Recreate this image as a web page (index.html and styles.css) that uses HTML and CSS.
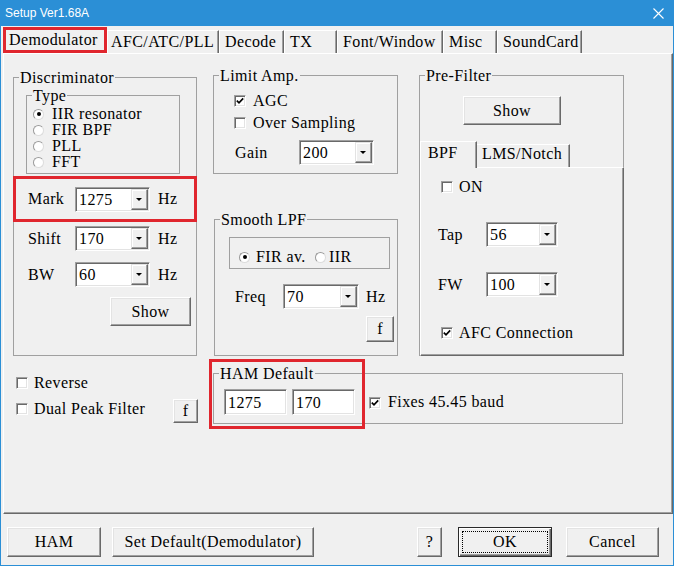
FILE: index.html
```html
<!DOCTYPE html>
<html>
<head>
<meta charset="utf-8">
<title>Setup Ver1.68A</title>
<link rel="stylesheet" href="styles.css">
</head>
<body>
<div class="window">
  <div class="titlebar">
    <span class="title">Setup Ver1.68A</span>
    <svg class="close" width="11" height="11" viewBox="0 0 11 11"><path d="M0.5 0.5L10.5 10.5M10.5 0.5L0.5 10.5" stroke="#fff" stroke-width="1.1" fill="none"/></svg>
  </div>

  <div class="tabs">
    <div class="tab active t-demod">Demodulator</div>
    <div class="tab t-afc">AFC/ATC/PLL</div>
    <div class="tab t-decode">Decode</div>
    <div class="tab t-tx">TX</div>
    <div class="tab t-font">Font/Window</div>
    <div class="tab t-misc">Misc</div>
    <div class="tab t-sound">SoundCard</div>
  </div>

  <div class="page">
    <div class="main-row">
      <fieldset class="group g-disc">
        <legend>Discriminator</legend>
        <fieldset class="group g-type">
          <legend>Type</legend>
          <div class="radio-row first"><span class="rb on"></span>IIR resonator</div>
          <div class="radio-row"><span class="rb"></span>FIR BPF</div>
          <div class="radio-row"><span class="rb"></span>PLL</div>
          <div class="radio-row"><span class="rb"></span>FFT</div>
        </fieldset>
        <div class="field-row mark-row">
          <span class="lbl lbl-disc">Mark</span>
          <div class="combo w75"><span class="val">1275</span><span class="drop"><i class="arrow"></i></span></div>
          <span class="hz">Hz</span>
        </div>
        <div class="field-row disc-row shift-row">
          <span class="lbl lbl-disc">Shift</span>
          <div class="combo w75"><span class="val">170</span><span class="drop"><i class="arrow"></i></span></div>
          <span class="hz">Hz</span>
        </div>
        <div class="field-row disc-row bw-row">
          <span class="lbl lbl-disc">BW</span>
          <div class="combo w75"><span class="val">60</span><span class="drop"><i class="arrow"></i></span></div>
          <span class="hz">Hz</span>
        </div>
        <div class="btn show-disc">Show</div>
      </fieldset>

      <div class="col-mid">
        <fieldset class="group g-limit">
          <legend>Limit Amp.</legend>
          <div class="check-row agc-row"><span class="cb"><svg width="8" height="8" viewBox="0 0 8 8"><polyline points="0.8,3.6 3,5.8 7.2,1.4" fill="none" stroke="#000" stroke-width="1.7"/></svg></span>AGC</div>
          <div class="check-row over-row"><span class="cb"></span>Over Sampling</div>
          <div class="field-row gain-row">
            <span class="lbl lbl-gain">Gain</span>
            <div class="combo w75"><span class="val">200</span><span class="drop"><i class="arrow"></i></span></div>
          </div>
        </fieldset>

        <fieldset class="group g-lpf">
          <legend>Smooth LPF</legend>
          <div class="radio-box">
            <div class="ritem r-fir"><span class="rb on"></span>FIR av.</div>
            <div class="ritem r-iir"><span class="rb"></span>IIR</div>
          </div>
          <div class="field-row freq-row">
            <span class="lbl lbl-freq">Freq</span>
            <div class="combo w76"><span class="val">70</span><span class="drop"><i class="arrow"></i></span></div>
            <span class="hz hz-freq">Hz</span>
          </div>
          <div class="btn f-lpf">f</div>
        </fieldset>
      </div>

      <fieldset class="group g-pre">
        <legend>Pre-Filter</legend>
        <div class="btn show-pre">Show</div>
        <div class="subtabs">
          <div class="subtab-strip">
            <div class="subtab sel">BPF</div>
            <div class="subtab lms">LMS/Notch</div>
          </div>
          <div class="subpage">
            <div class="check-row on-row"><span class="cb"></span>ON</div>
            <div class="field-row tap-row">
              <span class="lbl lbl-pre">Tap</span>
              <div class="combo w72"><span class="val">56</span><span class="drop"><i class="arrow"></i></span></div>
            </div>
            <div class="field-row fw-row">
              <span class="lbl lbl-pre">FW</span>
              <div class="combo w72"><span class="val">100</span><span class="drop"><i class="arrow"></i></span></div>
            </div>
            <div class="check-row afc-row"><span class="cb"><svg width="8" height="8" viewBox="0 0 8 8"><polyline points="0.8,3.6 3,5.8 7.2,1.4" fill="none" stroke="#000" stroke-width="1.7"/></svg></span>AFC Connection</div>
          </div>
        </div>
      </fieldset>
    </div>

    <div class="bottom-row">
      <div class="left-block">
        <div class="check-row rev-row"><span class="cb"></span>Reverse</div>
        <div class="dual-row">
          <div class="check-row dual-label"><span class="cb"></span>Dual Peak Filter</div>
          <div class="btn f-dual">f</div>
        </div>
      </div>
      <fieldset class="group g-ham">
        <legend>HAM Default</legend>
        <div class="ham-row">
          <div class="edit">1275</div>
          <div class="edit edit2">170</div>
          <span class="cb cb-fix"><svg width="8" height="8" viewBox="0 0 8 8"><polyline points="0.8,3.6 3,5.8 7.2,1.4" fill="none" stroke="#000" stroke-width="1.7"/></svg></span>
          <span>Fixes 45.45 baud</span>
        </div>
      </fieldset>
      <div class="red-ham"></div>
    </div>
  </div>

  <div class="buttons">
    <div class="btn b-ham">HAM</div>
    <div class="btn b-setdef">Set Default(Demodulator)</div>
    <div class="btn b-help">?</div>
    <div class="btn b-ok"><span class="focus">OK</span></div>
    <div class="btn b-cancel">Cancel</div>
  </div>
</div>
</body>
</html>
```

FILE: styles.css
```css
* { box-sizing: border-box; }
html, body { margin: 0; padding: 0; }
body {
  width: 674px; height: 566px; overflow: hidden;
  background: #f0f0f0;
  font-family: "Liberation Serif", "Times New Roman", serif;
  font-size: 16px; line-height: 18px; letter-spacing: 0.4px; color: #000;
}
.window {
  width: 674px; height: 566px;
  border: 1px solid #2b8fd6; border-top: none;
  background: #f0f0f0;
}
.titlebar {
  height: 26px; margin: 0 -1px;
  background: #2b8fd6;
  display: flex; align-items: center;
  padding-left: 5px; padding-right: 10px;
}
.title {
  font-family: "Liberation Sans", Arial, sans-serif;
  font-size: 12px; line-height: 14px; letter-spacing: 0;
  color: #fff;
}
.close { margin-left: auto; }

/* main tabs */
.tabs {
  height: 27px; display: flex; align-items: flex-end;
  padding-left: 2px;
}
.tab {
  flex: none; height: 23px;
  border-left: 1px solid #fff; border-top: 1px solid #fff;
  border-right: 1px solid #696969;
  box-shadow: inset -1px 0 0 #a0a0a0;
  padding: 2px 0 0 5px;
  white-space: nowrap; overflow: hidden;
}
.tab.active {
  height: 26px; border: 3px solid #e0262e;
  box-shadow: none;
  padding: 1px 0 0 3px;
}
.t-demod { width: 104px; }
.t-afc { width: 112px; padding-left: 3px; }
.t-decode { width: 65px; }
.t-tx { width: 53px; }
.t-font { width: 106px; }
.t-misc { width: 54px; }
.t-sound { width: 85px; }

.page {
  margin-left: 2px; width: 670px; height: 461px;
  border: 1px solid; border-color: #fff #696969 #696969 #fff;
  box-shadow: inset -1px -1px 0 #a0a0a0;
}

/* group boxes */
.group {
  margin: 0; padding: 0; min-width: 0;
  border: 1px solid #a0a0a0;
}
.group legend {
  padding: 0 1px; margin-left: 5px;
  line-height: 19px;
}

.main-row { display: flex; align-items: flex-start; margin-top: 12px; }
.g-disc { margin: 2px 0 0 9px; width: 184px; height: 288px; }
.col-mid { margin-left: 16px; width: 185px; display: flex; flex-direction: column; }
.g-limit { width: 185px; height: 108px; }
.g-lpf { margin: 36px 0 0 1px; width: 184px; height: 146px; }
.g-pre { margin-left: 21px; width: 205px; height: 290px; }

.g-type { margin: -1px 0 0 12px; width: 154px; height: 88px; }
.radio-row { height: 16px; line-height: 16px; display: flex; align-items: center; padding-left: 6px; }
.radio-row.first { margin-top: 1px; }
.radio-row .rb { margin-right: 8px; }

.rb {
  flex: none; width: 11px; height: 11px; border-radius: 50%;
  background: #fff;
  border: 1px solid; border-color: #9a9a9a #dcdcdc #dcdcdc #9a9a9a;
  display: flex; align-items: center; justify-content: center;
}
.rb.on::after { content: ""; width: 4px; height: 4px; border-radius: 50%; background: #000; }

.cb {
  flex: none; width: 12px; height: 12px; background: #fff;
  border: 1px solid; border-color: #a0a0a0 #fff #fff #a0a0a0;
  box-shadow: inset 1px 1px 0 #696969, inset -1px -1px 0 #e3e3e3;
  display: flex; align-items: center; justify-content: center;
}
.cb svg { display: block; }

.field-row { display: flex; align-items: center; height: 25px; }
.lbl { flex: none; }
.lbl-disc { width: 47px; }
.hz { margin-left: 8px; }
.mark-row {
  margin: 2px 0 0 -1px; width: 184px; height: 46px;
  border: 3px solid #e0262e; padding-left: 12px;
}
.disc-row { padding-left: 14px; }
.shift-row { margin-top: 4px; }
.bw-row { margin-top: 11px; }

.combo {
  flex: none; height: 25px; display: flex; align-items: stretch;
  background: #fff;
  border: 1px solid; border-color: #a0a0a0 #fff #fff #a0a0a0;
  box-shadow: inset 1px 1px 0 #696969, inset -1px -1px 0 #e3e3e3;
  padding-left: 3px;
}
.w75 { width: 75px; }
.w76 { width: 76px; }
.w72 { width: 72px; }
.combo .val { flex: 1; display: flex; align-items: center; padding-top: 1px; }
.combo .drop {
  flex: none; width: 17px; margin: 1px 1px 1px 0;
  background: #f0f0f0;
  border: 1px solid; border-color: #e3e3e3 #696969 #696969 #e3e3e3;
  box-shadow: inset -1px -1px 0 #a0a0a0, inset 1px 1px 0 #fff;
  display: flex; align-items: center; justify-content: center;
}
.arrow {
  width: 0; height: 0;
  border-left: 3px solid transparent; border-right: 3px solid transparent;
  border-top: 3px solid #000;
  margin-left: -1px;
}

.btn {
  flex: none;
  display: flex; align-items: center; justify-content: center;
  background: #f0f0f0;
  border: 1px solid; border-color: #fff #696969 #696969 #fff;
  box-shadow: inset -1px -1px 0 #a0a0a0, inset 1px 1px 0 #e3e3e3;
  white-space: nowrap;
}
.show-disc { margin: 10px 0 0 96px; width: 81px; height: 29px; }

.check-row { display: flex; align-items: center; height: 16px; }
.check-row .cb { margin-right: 7px; }
.agc-row { margin-top: 8px; padding-left: 20px; }
.over-row { margin-top: 6px; padding-left: 20px; }
.gain-row { margin-top: 9px; padding-left: 21px; }
.lbl-gain { width: 64px; }

.radio-box {
  margin: 8px 0 0 14px; width: 161px; height: 32px;
  border: 1px solid #a0a0a0;
  padding: 11px 0 0 9px;
  display: flex; align-items: flex-start;
}
.ritem { display: flex; align-items: center; height: 16px; }
.r-fir { width: 76px; }
.r-fir .rb { margin-right: 6px; }
.r-iir .rb { margin-right: 3px; }
.freq-row { margin-top: 15px; padding-left: 20px; }
.lbl-freq { width: 48px; }
.hz-freq { margin-left: 7px; }
.f-lpf { margin: 7px 0 0 151px; width: 28px; height: 26px; }

.show-pre { margin: 11px 0 0 43px; width: 98px; height: 29px; }
.subtabs { margin: 16px -1px -1px 0; height: 215px; display: flex; flex-direction: column; }
.subtab-strip { height: 26px; display: flex; align-items: flex-end; }
.subtab {
  flex: none; white-space: nowrap;
  border-top: 1px solid #fff; border-right: 1px solid #696969;
  box-shadow: inset -1px 0 0 #a0a0a0;
  background: #f0f0f0;
}
.subtab.sel {
  width: 57px; height: 27px; margin-bottom: -1px;
  border-left: 1px solid #fff;
  padding: 2px 0 0 7px;
  position: relative; z-index: 1;
}
.subtab.lms { width: 93px; height: 23px; padding: 0 0 0 5px; }
.subpage {
  flex: 1;
  border: 1px solid; border-color: #fff #696969 #696969 #fff;
  box-shadow: inset -1px -1px 0 #a0a0a0;
  background: #f0f0f0;
}
.on-row { margin-top: 11px; padding-left: 20px; }
.on-row .cb, .afc-row .cb { margin-right: 6px; }
.tap-row { margin-top: 27px; padding-left: 17px; }
.fw-row { margin-top: 25px; padding-left: 17px; }
.lbl-pre { width: 48px; }
.afc-row { margin-top: 28px; padding-left: 20px; }

.bottom-row { position: relative; display: flex; align-items: flex-start; margin-top: 8px; }
.left-block { width: 209px; flex: none; }
.rev-row { margin-top: 11px; padding-left: 12px; }
.rev-row .cb, .dual-label .cb { margin-right: 6px; }
.dual-row { display: flex; align-items: flex-start; margin-top: 8px; padding-left: 12px; }
.dual-label { width: 157px; margin-top: 2px; }
.f-dual { width: 25px; height: 24px; }

.g-ham { width: 410px; height: 60px; flex: none; }
.ham-row { display: flex; align-items: center; margin: 6px 0 0 10px; height: 26px; }
.edit {
  width: 63px; height: 26px; flex: none;
  background: #fff;
  border: 1px solid; border-color: #a0a0a0 #fff #fff #a0a0a0;
  box-shadow: inset 1px 1px 0 #696969, inset -1px -1px 0 #e3e3e3;
  padding: 4px 0 0 3px;
}
.edit2 { margin-left: 5px; }
.cb-fix { margin: 1px 7px 0 14px; }
.red-ham {
  position: absolute; left: 205px; top: -5px;
  width: 156px; height: 70px;
  border: 3px solid #e0262e;
  pointer-events: none;
}

.buttons { display: flex; height: 30px; margin-top: 13px; padding-left: 6px; }
.b-ham { width: 94px; height: 30px; }
.b-setdef { width: 202px; height: 30px; margin-left: 11px; }
.b-help { width: 25px; height: 30px; margin-left: 103px; }
.b-ok {
  width: 94px; height: 30px; margin-left: 16px;
  border: 1px solid #2a2a2a;
  box-shadow: inset 1px 1px 0 #fff, inset -1px -1px 0 #696969, inset -2px -2px 0 #a0a0a0;
  padding: 3px;
  align-items: stretch;
}
.b-ok .focus {
  flex: 1; border: 1px dotted #000;
  display: flex; align-items: center; justify-content: center;
}
.b-cancel { width: 93px; height: 30px; margin-left: 14px; }
```
